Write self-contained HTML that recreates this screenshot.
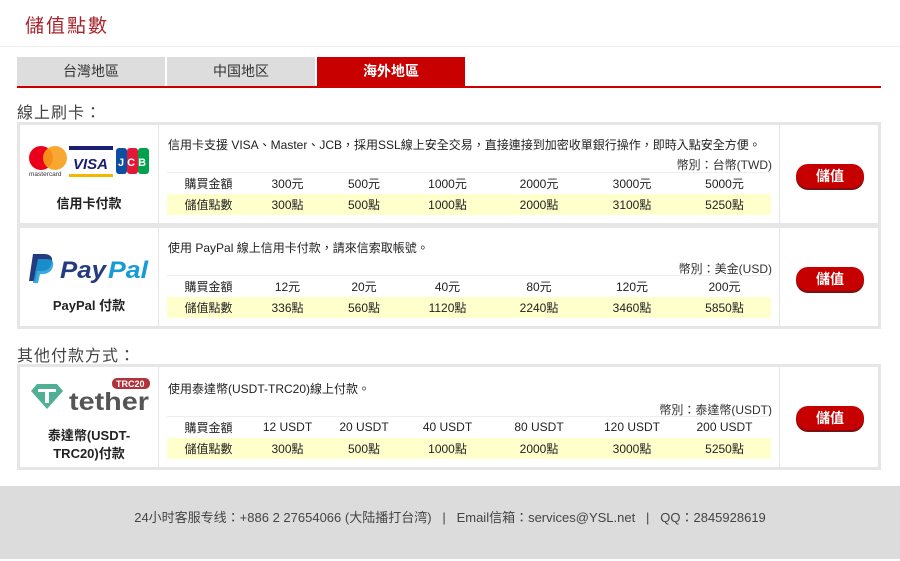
<!DOCTYPE html>
<html><head><meta charset="utf-8"><style>
*{margin:0;padding:0;box-sizing:border-box}
body{width:900px;height:561px;background:#fff;font-family:"Liberation Sans","Noto Sans CJK TC",sans-serif;position:relative;overflow:hidden;color:#222}
.abs{position:absolute}
.title{left:25px;top:11px;font-size:19px;color:#a8232a;letter-spacing:2px}
.hr{left:0;top:46px;width:900px;height:1px;background:#eee}
.tab{top:57px;height:29px;width:148px;background:#ddd;text-align:center;line-height:29px;font-size:14px;color:#333}
.tab.on{background:#c90000;color:#fff;font-weight:bold}
.tabline{left:17px;top:86px;width:864px;height:2px;background:#c00}
.sec{left:17px;font-size:16px;color:#444;letter-spacing:1px}
.box{left:17px;width:864px;border:3px solid #e6e6e6;background:#fff}
.lc{position:absolute;left:0;top:0;width:139px;height:100%;border-right:1px solid #e6e6e6;text-align:center}
.rc{position:absolute;left:759px;top:0;width:100px;height:100%;border-left:1px solid #e6e6e6}
.btn{position:absolute;left:16px;width:68px;height:24px;border-radius:12px;background:#c60000;color:#fff;text-align:center;line-height:24px;font-size:14px;font-weight:bold;box-shadow:0 2px 0 #7a1010}
.desc{position:absolute;left:148px;font-size:12px;color:#222}
.cur{position:absolute;right:106px;font-size:12px;color:#333}
table{position:absolute;left:147px;width:604px;border-collapse:collapse;font-size:12px;table-layout:fixed}
td{height:21px;text-align:center;color:#222;padding:0}
tr.a{border-top:1px solid #eee;background:#fff}
tr.b{background:#ffffcc}
.lab{font-size:13px;font-weight:bold;color:#222}
</style></head><body>
<div class="abs title">儲值點數</div>
<div class="abs hr"></div>
<div class="abs tab" style="left:17px">台灣地區</div>
<div class="abs tab" style="left:167px">中国地区</div>
<div class="abs tab on" style="left:317px">海外地區</div>
<div class="abs tabline"></div>
<div class="abs sec" style="top:99px">線上刷卡：</div>

<div class="abs box" style="top:122px;height:104px">
 <div class="lc">
  <svg width="124" height="34" style="position:absolute;left:8px;top:20px" viewBox="0 0 124 34">
   <circle cx="13" cy="13" r="12" fill="#eb001b"/><circle cx="27" cy="13" r="12" fill="#f79e1b" opacity=".9"/>
   <text x="1" y="31" font-size="6.5" fill="#333" font-family="Liberation Sans">mastercard</text>
   <rect x="41" y="1" width="44" height="4" fill="#1a1f71"/>
   <text x="45" y="24" font-size="15" font-weight="bold" font-style="italic" fill="#1a1f71" font-family="Liberation Sans">VISA</text>
   <rect x="41" y="29" width="44" height="3" fill="#f7b600"/>
   <rect x="88" y="3" width="11" height="26" rx="3" fill="#0b4ea2"/><rect x="99" y="3" width="11" height="26" rx="3" fill="#e21836"/><rect x="110" y="3" width="11" height="26" rx="3" fill="#00a14b"/>
   <text x="90" y="21" font-size="11" font-weight="bold" fill="#fff" font-family="Liberation Sans">J C B</text>
  </svg>
  <div class="lab" style="position:absolute;top:68px;width:100%">信用卡付款</div>
 </div>
 <div class="desc" style="top:11px">信用卡支援 VISA、Master、JCB，採用SSL線上安全交易，直接連接到加密收單銀行操作，即時入點安全方便。</div>
 <div class="cur" style="top:31px">幣別：台幣(TWD)</div>
 <table style="top:47px"><colgroup><col style="width:83px"><col style="width:75px"><col style="width:78px"><col style="width:89px"><col style="width:94px"><col style="width:92px"><col style="width:93px"></colgroup><tr class="a"><td>購買金額</td><td>300元</td><td>500元</td><td>1000元</td><td>2000元</td><td>3000元</td><td>5000元</td></tr>
 <tr class="b"><td>儲值點數</td><td>300點</td><td>500點</td><td>1000點</td><td>2000點</td><td>3100點</td><td>5250點</td></tr></table>
 <div class="rc"><div class="btn" style="top:39px">儲值</div></div>
</div>

<div class="abs box" style="top:225px;height:104px">
 <div class="lc">
  <svg width="124" height="32" style="position:absolute;left:9px;top:24px" viewBox="0 0 124 32">
   <path d="M4 2h11c6 0 9 3 8 8-1 6-5 9-11 9h-4l-2 10H0z" fill="#253b80"/>
   <path d="M9 7h9c5 0 7 3 6 7-1 5-5 8-10 8h-3l-2 9H4z" fill="#179bd7" opacity=".85"/>
   <text x="31" y="26" font-size="24" font-weight="bold" font-style="italic" fill="#253b80" font-family="Liberation Sans" textLength="46" lengthAdjust="spacingAndGlyphs">Pay</text>
   <text x="79" y="26" font-size="24" font-weight="bold" font-style="italic" fill="#179bd7" font-family="Liberation Sans" textLength="40" lengthAdjust="spacingAndGlyphs">Pal</text>
  </svg>
  <div class="lab" style="position:absolute;top:67px;width:100%">PayPal 付款</div>
 </div>
 <div class="desc" style="top:11px">使用 PayPal 線上信用卡付款，請來信索取帳號。</div>
 <div class="cur" style="top:32px">幣別：美金(USD)</div>
 <table style="top:47px"><colgroup><col style="width:83px"><col style="width:75px"><col style="width:78px"><col style="width:89px"><col style="width:94px"><col style="width:92px"><col style="width:93px"></colgroup><tr class="a"><td>購買金額</td><td>12元</td><td>20元</td><td>40元</td><td>80元</td><td>120元</td><td>200元</td></tr>
 <tr class="b"><td>儲值點數</td><td>336點</td><td>560點</td><td>1120點</td><td>2240點</td><td>3460點</td><td>5850點</td></tr></table>
 <div class="rc"><div class="btn" style="top:39px">儲值</div></div>
</div>

<div class="abs sec" style="top:342px">其他付款方式：</div>

<div class="abs box" style="top:364px;height:106px">
 <div class="lc">
  <svg width="124" height="34" style="position:absolute;left:8px;top:10px" viewBox="0 0 124 34">
   <rect x="84" y="1" width="38" height="11" rx="5" fill="#b0323a"/>
   <text x="88" y="10" font-size="9" font-weight="bold" fill="#fff" font-family="Liberation Sans">TRC20</text>
   <path d="M3 14l6-7h20l6 7-16 18z" fill="#50af95"/>
   <path d="M10 12h18v3h-7v11h-4V15h-7z" fill="#fff"/>
   <text x="41" y="33" font-size="25" font-weight="bold" fill="#555" font-family="Liberation Sans" textLength="80" lengthAdjust="spacingAndGlyphs">tether</text>
  </svg>
  <div class="lab" style="position:absolute;top:60px;width:100%;line-height:18px">泰達幣(USDT-<br>TRC20)付款</div>
 </div>
 <div class="desc" style="top:13px">使用泰達幣(USDT-TRC20)線上付款。</div>
 <div class="cur" style="top:34px">幣別：泰達幣(USDT)</div>
 <table style="top:49px"><colgroup><col style="width:83px"><col style="width:75px"><col style="width:78px"><col style="width:89px"><col style="width:94px"><col style="width:92px"><col style="width:93px"></colgroup><tr class="a"><td>購買金額</td><td>12 USDT</td><td>20 USDT</td><td>40 USDT</td><td>80 USDT</td><td>120 USDT</td><td>200 USDT</td></tr>
 <tr class="b"><td>儲值點數</td><td>300點</td><td>500點</td><td>1000點</td><td>2000點</td><td>3000點</td><td>5250點</td></tr></table>
 <div class="rc"><div class="btn" style="top:39px">儲值</div></div>
</div>

<div class="abs" style="left:0;top:486px;width:900px;height:73px;background:#dcdcdc;text-align:center;line-height:64px;font-size:13px;color:#444">24小时客服专线：+886 2 27654066 (大陆播打台湾) &nbsp; | &nbsp; Email信箱：services@YSL.net &nbsp; | &nbsp; QQ：2845928619</div>
</body></html>
